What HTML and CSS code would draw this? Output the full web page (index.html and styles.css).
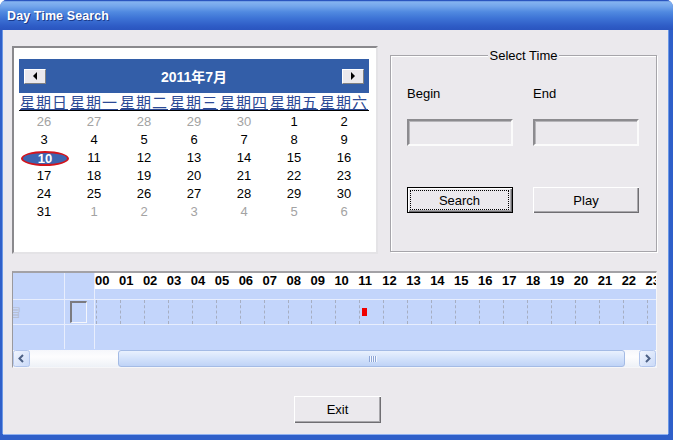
FILE: index.html
```html
<!DOCTYPE html>
<html>
<head>
<meta charset="utf-8">
<link rel="stylesheet" href="styles.css">
</head>
<body>
<div class="window">
  <div class="titlebar"><span class="title">Day Time Search</span></div>
  <div class="client">
    <div class="top">
      <div class="calendar">
        <div class="cal-head">
          <span class="nav"><svg width="6" height="8" viewBox="0 0 6 8"><polygon points="5,0 1,4 5,8" fill="#000"/></svg></span>
          <span class="month">2011年7月</span>
          <span class="nav"><svg width="6" height="8" viewBox="0 0 6 8"><polygon points="1,0 5,4 1,8" fill="#000"/></svg></span>
        </div>
        <div class="weekdays">
          <span>星期日</span><span>星期一</span><span>星期二</span><span>星期三</span><span>星期四</span><span>星期五</span><span>星期六</span>
        </div>
        <div class="days">
          <span class="other">26</span><span class="other">27</span><span class="other">28</span><span class="other">29</span><span class="other">30</span><span>1</span><span>2</span>
          <span>3</span><span>4</span><span>5</span><span>6</span><span>7</span><span>8</span><span>9</span>
          <span><b class="selected">10</b></span><span>11</span><span>12</span><span>13</span><span>14</span><span>15</span><span>16</span>
          <span>17</span><span>18</span><span>19</span><span>20</span><span>21</span><span>22</span><span>23</span>
          <span>24</span><span>25</span><span>26</span><span>27</span><span>28</span><span>29</span><span>30</span>
          <span>31</span><span class="other">1</span><span class="other">2</span><span class="other">3</span><span class="other">4</span><span class="other">5</span><span class="other">6</span>
        </div>
      </div>
      <div class="group">
        <span class="legend">Select Time</span>
        <div class="pair labels"><span>Begin</span><span>End</span></div>
        <div class="pair inputs"><span class="field"></span><span class="field"></span></div>
        <div class="pair buttons">
          <button class="btn default"><span class="focus">Search</span></button>
          <button class="btn"><span class="plain">Play</span></button>
        </div>
      </div>
    </div>
    <div class="timeline">
      <div class="tl-grid">
        <div class="cell c1"></div>
        <div class="cell c2"></div>
        <div class="cell hours head">
          <div class="labels-row">
            <span>00</span><span>01</span><span>02</span><span>03</span><span>04</span><span>05</span><span>06</span><span>07</span><span>08</span><span>09</span><span>10</span><span>11</span><span>12</span><span>13</span><span>14</span><span>15</span><span>16</span><span>17</span><span>18</span><span>19</span><span>20</span><span>21</span><span>22</span><span>23</span>
          </div>
        </div>
        <div class="cell c1"><span class="ghost">冒</span></div>
        <div class="cell c2"><span class="check"></span></div>
        <div class="cell hours">
          <div class="slots">
            <span></span><span></span><span></span><span></span><span></span><span></span><span></span><span></span><span></span><span></span><span></span><span><i class="rec"></i></span><span></span><span></span><span></span><span></span><span></span><span></span><span></span><span></span><span></span><span></span><span></span><span></span>
          </div>
        </div>
        <div class="cell c1"></div>
        <div class="cell c2"></div>
        <div class="cell hours"></div>
      </div>
      <div class="hscroll">
        <span class="sbtn"><svg width="17" height="17" viewBox="0 0 17 17"><defs><linearGradient id="g1" x1="0" y1="0" x2="1" y2="1"><stop offset="0" stop-color="#f2f6fe"/><stop offset="1" stop-color="#c9d9f8"/></linearGradient></defs><rect x="0.5" y="0.5" width="16" height="16" rx="2" fill="url(#g1)" stroke="#b3c6ec"/><path d="M10 5 L6.5 8.5 L10 12" fill="none" stroke="#4d6185" stroke-width="2"/></svg></span>
        <span class="track">
          <span class="thumb"><span class="grip"></span></span>
        </span>
        <span class="sbtn"><svg width="17" height="17" viewBox="0 0 17 17"><defs><linearGradient id="g2" x1="0" y1="0" x2="1" y2="1"><stop offset="0" stop-color="#f2f6fe"/><stop offset="1" stop-color="#c9d9f8"/></linearGradient></defs><rect x="0.5" y="0.5" width="16" height="16" rx="2" fill="url(#g2)" stroke="#b3c6ec"/><path d="M7 5 L10.5 8.5 L7 12" fill="none" stroke="#4d6185" stroke-width="2"/></svg></span>
      </div>
    </div>
    <button class="btn exit"><span class="plain">Exit</span></button>
  </div>
</div>
</body>
</html>
```
FILE: styles.css
```css
html, body {
  margin: 0;
  background: #ffffff;
}
body {
  font-family: "Liberation Sans", Arial, sans-serif;
  font-size: 13px;
  color: #000;
}
.window {
  width: 673px;
  height: 440px;
  display: flex;
  flex-direction: column;
  background: #2f5fc9;
  border-radius: 7px 7px 0 0;
  overflow: hidden;
}
.titlebar {
  height: 30px;
  flex: none;
  display: flex;
  align-items: center;
  padding-left: 7px;
  background: linear-gradient(to bottom, #3a64c8 0px, #84b3f0 2px, #74a6ec 6px, #5089e0 12px, #3e74d6 18px, #2e5cc6 26px, #2a55bf 30px);
  box-shadow: inset 0 1px 0 #2a55bf;
}
.title {
  color: #fff;
  font-weight: bold;
  font-size: 12.5px;
  letter-spacing: 0.1px;
  text-shadow: 1px 1px 0 #1a3a8a;
  padding-top: 2px;
}
.client {
  flex: 1;
  margin: 0 5px 6px 3px;
  background: #ebe9ed;
  padding: 16px 0 0 9px;
  display: flex;
  flex-direction: column;
  align-items: flex-start;
  box-shadow: -1px 0 0 #6b98e6, 1px 0 0 #6b98e6, 0 1px 0 #8fb0f0;
}
.top {
  display: flex;
  align-items: flex-start;
}

/* Calendar */
.calendar {
  width: 366px;
  height: 208px;
  box-sizing: border-box;
  background: #fff;
  border: 2px solid;
  border-color: #8a898d #e4e3e6 #e4e3e6 #8a898d;
  padding: 11px 0 0 5px;
}
.cal-head {
  width: 350px;
  height: 34px;
  background: #335ea8;
  display: flex;
  align-items: center;
  justify-content: space-between;
  padding: 0 5px;
  box-sizing: border-box;
}
.nav {
  width: 22px;
  height: 15px;
  box-sizing: border-box;
  background: #ebe9ed;
  border: 1px solid;
  border-color: #fff #808080 #808080 #fff;
  display: flex;
  align-items: center;
  justify-content: center;
}
.month {
  color: #fff;
  font-weight: bold;
  font-size: 14px;
  font-family: "Liberation Sans", "Noto Sans CJK SC", sans-serif;
}
.weekdays {
  width: 350px;
  display: grid;
  grid-template-columns: repeat(7, 50px);
  height: 17px;
  border-bottom: 1px solid #000;
  font-family: "Noto Sans CJK SC", sans-serif;
  font-size: 15px;
  letter-spacing: 1px;
  line-height: 17px;
}
.weekdays span {
  text-align: center;
  color: #2c4a96;
  text-decoration: underline;
  white-space: nowrap;
}
.days {
  width: 350px;
  margin-top: 2px;
  display: grid;
  grid-template-columns: repeat(7, 50px);
  grid-auto-rows: 18px;
  line-height: 18px;
  font-size: 13px;
}
.days span {
  text-align: center;
  display: flex;
  align-items: center;
  justify-content: center;
}
.days .other {
  color: #a3a3a3;
}
.selected {
  width: 49px;
  height: 15px;
  box-sizing: border-box;
  border-radius: 50%;
  border: 2px solid #d2141c;
  background: #3d64b0;
  color: #fff;
  font-weight: bold;
  font-size: 13px;
  line-height: 11px;
  text-align: center;
  margin-left: 2px;
}

/* Select time group */
.group {
  margin: 9px 0 0 12px;
  width: 267px;
  height: 197px;
  box-sizing: border-box;
  border: 1px solid #a6a5aa;
  box-shadow: 1px 1px 0 #fff, inset 1px 1px 0 #fff;
  display: flex;
  flex-direction: column;
  padding-left: 16px;
}
.legend {
  align-self: center;
  margin: -8px 0 0 -16px;
  padding: 0 2px;
  background: #ebe9ed;
  line-height: 15px;
  font-size: 13px;
}
.pair {
  display: flex;
  gap: 20px;
}
.pair > * {
  width: 106px;
}
.labels {
  margin-top: 23px;
  line-height: 15px;
}
.inputs {
  margin-top: 18px;
}
.field {
  height: 27px;
  box-sizing: border-box;
  border: 2px solid;
  border-color: #8c8b8f #fbfbfb #fbfbfb #8c8b8f;
  box-shadow: inset 1px 1px 0 #b6b5b9;
}
.buttons {
  margin-top: 41px;
}
.btn {
  width: 106px;
  height: 26px;
  box-sizing: border-box;
  padding: 0;
  margin: 0;
  border: none;
  background: #ebe9ed;
  box-shadow: inset 1px 1px 0 #fff, inset -1px -1px 0 #6f6e72, inset -2px -2px 0 #a9a8ac;
  font-family: "Liberation Sans", Arial, sans-serif;
  font-size: 13px;
  color: #000;
  display: flex;
}
.btn .plain {
  flex: 1;
  display: flex;
  align-items: center;
  justify-content: center;
}
.btn.default {
  border: 1px solid #000;
  padding: 2px 3px 2px 2px;
}
.btn .focus {
  flex: 1;
  border: 1px dotted #000;
  display: flex;
  align-items: center;
  justify-content: center;
}
.exit {
  width: 87px;
  height: 27px;
  margin: 28px 0 0 282px;
}

/* Timeline */
.timeline {
  margin-top: 17px;
  width: 645px;
  box-sizing: border-box;
  border-style: solid;
  border-width: 2px 1px 1px 1px;
  border-color: #a3a2a6 #f6f6f8 #f6f6f8 #9a999d;
  background: #c3d5fb;
}
.tl-grid {
  display: grid;
  grid-template-columns: 51px 29px 561px;
  grid-template-rows: 26px 24px 24px;
  gap: 1px;
  background: #e8eefd;
}
.cell {
  background: #c3d5fb;
  overflow: hidden;
}
.labels-row {
  display: flex;
  height: 16px;
  background: #fff;
  width: 575px;
}
.labels-row span {
  flex: none;
  width: 23.95px;
  font-weight: bold;
  font-size: 13px;
  line-height: 16px;
}
.slots {
  display: flex;
  height: 100%;
  width: 575px;
  margin-left: 1px;
}
.slots span {
  flex: none;
  width: 23.95px;
  box-sizing: border-box;
  border-left: 1px dashed #a6aec2;
  display: flex;
  align-items: center;
}
.rec {
  width: 5px;
  height: 8px;
  background: #f00000;
  margin-left: 2px;
}
.c1 {
  display: flex;
  align-items: center;
}
.ghost {
  font-family: "Noto Sans CJK SC", sans-serif;
  font-size: 11px;
  line-height: 11px;
  color: #b4bbcc;
  margin-left: -3px;
}
.c2 {
  display: flex;
  align-items: center;
}
.check {
  width: 17px;
  height: 22px;
  box-sizing: border-box;
  margin-left: 5px;
  border-style: solid;
  border-color: #7b7b80 #f4f6fc #f4f6fc #7b7b80;
  border-width: 2px 1px 1px 2px;
}
.hscroll {
  display: flex;
  height: 17px;
  margin-top: 1px;
  background: linear-gradient(to bottom, #f6f7fb, #fdfdfe 40%, #eef1f7);
}
.sbtn {
  width: 17px;
  height: 17px;
  flex: none;
  display: block;
}
.sbtn svg {
  display: block;
}
.track {
  flex: 1;
  display: flex;
}
.thumb {
  margin-left: 88px;
  width: 507px;
  height: 17px;
  box-sizing: border-box;
  border: 1px solid #a4bbe5;
  border-radius: 3px;
  background: linear-gradient(to bottom, #e9f1fe, #d3e2fb 50%, #bfd3f7);
  display: flex;
  align-items: center;
  justify-content: center;
}
.grip {
  width: 8px;
  height: 6px;
  margin-left: 3px;
  background: repeating-linear-gradient(to right, #8ea6d6 0 1px, #f4f8ff 1px 2px);
}
```
